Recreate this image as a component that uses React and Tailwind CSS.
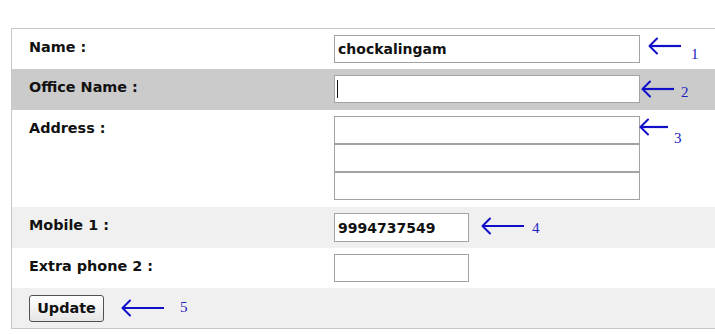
import React from 'react';

const Arrow = ({ len = 32, num, numGap = 10, numDy = 8, className = '' }) => (
  <div className={`flex items-start ${className}`}>
    <svg width={len + 2} height="20" viewBox={`0 0 ${len + 2} 20`} className="shrink-0">
      <path d={`M1.5 10 H${len + 1}`} stroke="#1010c8" strokeWidth="2.2" fill="none" />
      <path d="M9 2.5 L1.5 10 L9 17.5" stroke="#1010c8" strokeWidth="2" fill="none" strokeLinecap="round" strokeLinejoin="round" />
    </svg>
    <span
      className="text-[15px] leading-[16px] text-[#2020c0] font-['Liberation_Serif',serif]"
      style={{ marginLeft: numGap, marginTop: 2 + numDy }}
    >
      {num}
    </span>
  </div>
);

const Label = ({ children }) => (
  <div className="w-[322px] shrink-0 pl-[17px] pt-[10px] text-[14.4px] leading-[17px] font-bold text-[#111]">
    {children}
  </div>
);

const inputCls =
  'block h-[28px] border border-[#a3a3a3] bg-white px-[3px] text-[14px] font-bold text-[#111] outline-none font-["DejaVu_Sans",sans-serif]';

export default function App() {
  return (
    <div className="min-h-[334px] w-[715px] overflow-hidden bg-white pt-[28px] font-['DejaVu_Sans',sans-serif]">
      <div className="ml-[11px] w-[720px] border border-[#c8c8c8]">
        <div className="flex h-[40px] items-start bg-white">
          <Label>Name :</Label>
          <div className="flex items-start pt-[6px]">
            <input className={`${inputCls} w-[306px]`} defaultValue="chockalingam" readOnly />
            <Arrow className="ml-[8px] mt-[1px]" len={32} num="1" numGap={9} numDy={8} />
          </div>
        </div>

        <div className="flex h-[41px] items-start bg-[#cbcbcb]">
          <Label>Office Name :</Label>
          <div className="flex items-start pt-[6px]">
            <div className="relative">
              <input className={`${inputCls} w-[306px]`} defaultValue="" readOnly />
              <span className="absolute left-[3px] top-[5px] h-[18px] w-[1px] bg-[#111]" />
            </div>
            <Arrow className="ml-[1px] mt-[4px]" len={32} num="2" numGap={6} numDy={3} />
          </div>
        </div>

        <div className="flex h-[97px] items-start bg-white">
          <Label>Address :</Label>
          <div className="flex items-start pt-[6px]">
            <div className="flex flex-col">
              <input className={`${inputCls} w-[306px]`} readOnly />
              <input className={`${inputCls} w-[306px]`} readOnly />
              <input className={`${inputCls} w-[306px]`} readOnly />
            </div>
            <Arrow className="-ml-[1px] mt-[1px]" len={28} num="3" numGap={5} numDy={11} />
          </div>
        </div>

        <div className="flex h-[41px] items-start bg-[#f0f0f0]">
          <Label>Mobile 1 :</Label>
          <div className="flex items-start pt-[6px]">
            <input className={`${inputCls} h-[29px] w-[135px]`} defaultValue="9994737549" readOnly />
            <Arrow className="ml-[12px] mt-[3px]" len={42} num="4" numGap={7} numDy={2} />
          </div>
        </div>

        <div className="flex h-[40px] items-start bg-white">
          <Label>Extra phone 2 :</Label>
          <div className="pt-[6px]">
            <input className={`${inputCls} w-[135px]`} readOnly />
          </div>
        </div>

        <div className="flex h-[40px] items-start bg-[#f0f0f0] pl-[17px] pt-[7px]">
          <button className="h-[27px] w-[75px] rounded-[3px] border border-[#505050] bg-gradient-to-b from-white to-[#e6e6e6] text-[14.4px] font-bold text-[#111]">
            Update
          </button>
          <Arrow className="ml-[17px] mt-[3px]" len={42} num="5" numGap={15} numDy={-1} />
        </div>
      </div>
    </div>
  );
}
